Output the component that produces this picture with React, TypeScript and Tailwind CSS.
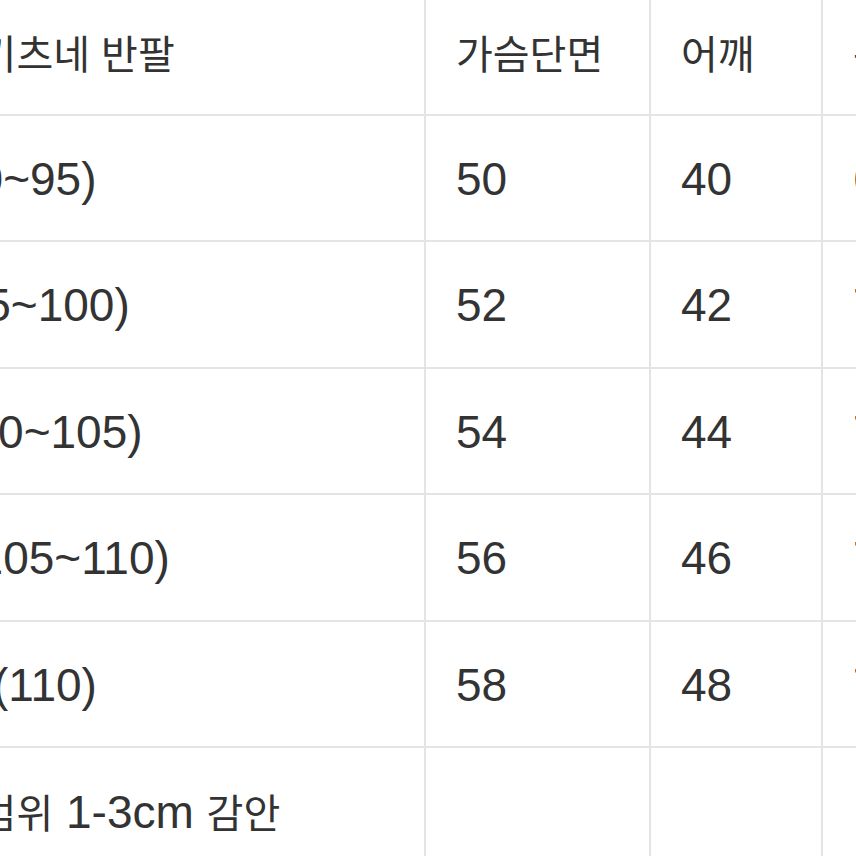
const rows = [
  { size: 'S(90~95)', chest: '50', shoulder: '40', length: '68', h: 'h-[126px]' },
  { size: 'M(95~100)', chest: '52', shoulder: '42', length: '70', h: 'h-[127px]' },
  { size: 'L(100~105)', chest: '54', shoulder: '44', length: '72', h: 'h-[126px]' },
  { size: 'XL(105~110)', chest: '56', shoulder: '46', length: '74', h: 'h-[127px]' },
  { size: 'XXL(110)', chest: '58', shoulder: '48', length: '76', h: 'h-[126px]' },
];

const ko = 'text-[40px]';

function Cell({ children, w, last }: { children?: React.ReactNode; w: string; last?: boolean }) {
  return (
    <div className={`${w} shrink-0 h-full flex items-center pl-[30px] ${last ? '' : 'border-r-2 border-[#e4e4e4]'}`}>
      <div className="whitespace-nowrap pt-[2px]">{children}</div>
    </div>
  );
}

export default function App() {
  return (
    <div className="w-[856px] h-[856px] overflow-hidden bg-white text-[#333333] text-[46px] font-['Liberation_Sans','Noto_Sans_CJK_KR',sans-serif]">
      <div className="ml-[-124px] mt-[-10px] w-[1200px]">
        <div className="flex h-[126px] border-b-2 border-[#e4e4e4]">
          <Cell w="w-[550px]">
            <span className={ko}>메종키츠네 반팔</span>
          </Cell>
          <Cell w="w-[225px]">
            <span className={ko}>가슴단면</span>
          </Cell>
          <Cell w="w-[172px]">
            <span className={ko}>어깨</span>
          </Cell>
          <Cell w="w-[200px]" last>
            <span className={ko}>총장</span>
          </Cell>
        </div>

        {rows.map((r) => (
          <div key={r.size} className={`flex ${r.h} border-b-2 border-[#e4e4e4]`}>
            <Cell w="w-[550px]">{r.size}</Cell>
            <Cell w="w-[225px]">{r.chest}</Cell>
            <Cell w="w-[172px]">{r.shoulder}</Cell>
            <Cell w="w-[200px]" last>{r.length}</Cell>
          </div>
        ))}

        <div className="flex h-[126px]">
          <Cell w="w-[550px]">
            <span className={ko}>오차범위</span> 1-3cm <span className={ko}>감안</span>
          </Cell>
          <Cell w="w-[225px]" />
          <Cell w="w-[172px]" />
          <Cell w="w-[200px]" last />
        </div>
      </div>
    </div>
  );
}
